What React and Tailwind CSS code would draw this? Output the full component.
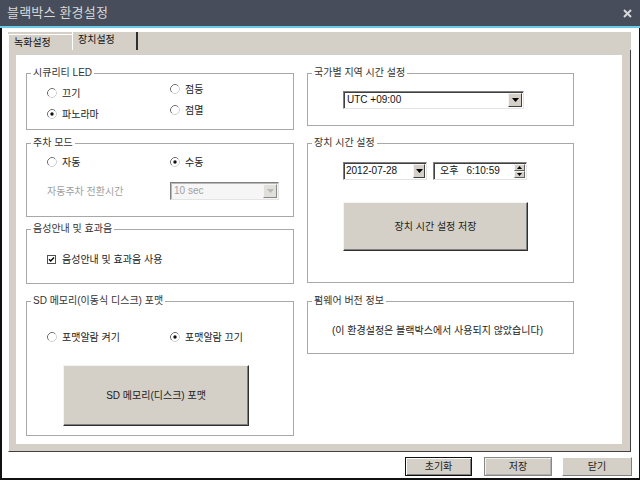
import React from 'react';

const GRAY = 'bg-[#d4d0c8]';

function Radio({ checked, label, className = '' }) {
  return (
    <div className={`flex h-[14px] items-center gap-[5px] ${className}`}>
      <svg width="10" height="10" viewBox="0 0 10 10" className="shrink-0">
        <circle cx="5" cy="5" r="4.5" fill="#fff" />
        <path d="M8.18 1.82A4.5 4.5 0 0 0 1.82 8.18" fill="none" stroke="#6e6e6e" strokeWidth="1" />
        <path d="M1.82 8.18A4.5 4.5 0 0 0 8.18 1.82" fill="none" stroke="#d0d0d0" strokeWidth="1" />
        {checked && <circle cx="5" cy="5" r="1.7" fill="#111" />}
      </svg>
      <span>{label}</span>
    </div>
  );
}

function Arrow({ color = '#000' }) {
  return (
    <svg width="7" height="4" viewBox="0 0 7 4">
      <path d="M0 0h7L3.5 4z" fill={color} />
    </svg>
  );
}

function DropButton({ disabled, w = 'w-[14px]' }) {
  return (
    <span
      className={`flex ${w} shrink-0 items-center justify-center border-t border-l border-t-[#f4f4f4] border-l-[#f4f4f4] border-b border-r border-b-[#404040] border-r-[#404040] ${GRAY} ${
        disabled ? 'opacity-60' : ''
      }`}
    >
      <Arrow color={disabled ? '#909090' : '#000'} />
    </span>
  );
}

function Field({ className = '', disabled, children }) {
  return (
    <div
      className={`flex h-[18px] border border-t-[#808080] border-l-[#808080] border-b-[#e4e4e4] border-r-[#e4e4e4] p-[1px] ${
        disabled
          ? 'bg-[#f6f6f6] text-[#a0a0a0] shadow-[inset_1px_1px_0_#b8b8b8]'
          : 'bg-white shadow-[inset_1px_1px_0_#404040]'
      } ${className}`}
    >
      {children}
    </div>
  );
}

function GroupBox({ title, className = '', children }) {
  return (
    <div className={`relative border border-[#a8a8a8] ${className}`}>
      <span className="absolute -top-[7px] left-[4px] bg-white px-[2px] leading-[12px] text-[#333]">
        {title}
      </span>
      {children}
    </div>
  );
}

function BigButton({ className = '', children }) {
  return (
    <div
      className={`flex items-center justify-center border-t border-l border-t-[#f4f4f4] border-l-[#f4f4f4] border-b border-r border-b-[#303030] border-r-[#303030] ${GRAY} text-[#222] shadow-[inset_-1px_-1px_0_#808080] ${className}`}
    >
      {children}
    </div>
  );
}

export default function App() {
  return (
    <div className="flex h-[480px] w-[640px] flex-col overflow-hidden bg-white font-['Liberation_Sans','Noto_Sans_CJK_KR',sans-serif] text-[10px] text-[#222]">
      {/* title bar */}
      <div className="flex h-[26px] shrink-0 items-center justify-between bg-[#474d5b] pl-[7px] pr-[8px]">
        <span className="text-[13px] tracking-[0.2px] text-[#d8d8d8]">블랙박스 환경설정</span>
        <svg width="9" height="9" viewBox="0 0 9 9">
          <path d="M1 1L8 8M8 1L1 8" stroke="#d8d8d8" strokeWidth="2" />
        </svg>
      </div>
      <div className="h-[2px] shrink-0 bg-[#6acbe8]" />

      <div className="flex-1 border-l-2 border-r border-b-2 border-[#111] bg-white">
        {/* tab control */}
        <div className="ml-[6px] mt-[4px] w-[623px]">
          <div className={`flex h-[18px] items-end ${GRAY}`}>
            <div className="h-[16px] w-[64px] border-t border-l border-white pl-[5px] leading-[15px] text-[#111]">
              녹화설정
            </div>
            <div className="h-[18px] w-[66px] border-l border-l-white border-r-2 border-r-[#303030] pl-[5px] leading-[16px] text-[#111]">
              장치설정
            </div>
          </div>

          <div
            className={`border-l border-l-white border-r border-r-[#404040] border-b border-b-[#404040] ${GRAY} pb-[7px] pl-[7px] pr-[8px] pt-[5px]`}
          >
            <div className="flex h-[389px] w-[606px] bg-white pl-[10px] pt-[18px]">
              {/* left column */}
              <div className="flex w-[268px] flex-col">
                <GroupBox title="시큐리티 LED" className="h-[57px]">
                  <div className="flex items-start">
                    <div className="ml-[20px] mt-[12px] flex w-[123px] flex-col gap-[7px]">
                      <Radio label="끄기" />
                      <Radio label="파노라마" checked />
                    </div>
                    <div className="mt-[8px] flex flex-col gap-[7px]">
                      <Radio label="점등" />
                      <Radio label="점멸" />
                    </div>
                  </div>
                </GroupBox>

                <GroupBox title="주차 모드" className="mt-[13px] h-[74px]">
                  <div className="ml-[20px] mt-[11px] flex">
                    <Radio label="자동" className="w-[123px]" />
                    <Radio label="수동" checked />
                  </div>
                  <div className="ml-[20px] mt-[13px] flex items-center">
                    <span className="w-[123px] text-[#a0a0a0]">자동주차 전환시간</span>
                    <Field disabled className="w-[109px]">
                      <span className="flex-1 pl-[2px] leading-[14px]">10 sec</span>
                      <DropButton disabled />
                    </Field>
                  </div>
                </GroupBox>

                <GroupBox title="음성안내 및 효과음" className="mt-[12px] h-[55px]">
                  <div className="ml-[20px] mt-[22px] flex h-[14px] items-center gap-[6px]">
                    <svg width="9" height="9" viewBox="0 0 9 9" className="shrink-0">
                      <rect x="0.5" y="0.5" width="8" height="8" fill="#fff" stroke="#505050" />
                      <path d="M2 4.3L3.7 6L7 2.6" fill="none" stroke="#000" strokeWidth="1.4" />
                    </svg>
                    <span>음성안내 및 효과음 사용</span>
                  </div>
                </GroupBox>

                <GroupBox title="SD 메모리(이동식 디스크) 포맷" className="mt-[17px] h-[135px]">
                  <div className="ml-[20px] mt-[28px] flex">
                    <Radio label="포맷알람 켜기" className="w-[123px]" />
                    <Radio label="포맷알람 끄기" checked />
                  </div>
                  <BigButton className="ml-[36px] mt-[21px] h-[61px] w-[186px]">
                    SD 메모리(디스크) 포맷
                  </BigButton>
                </GroupBox>
              </div>

              {/* right column */}
              <div className="ml-[13px] flex w-[267px] flex-col">
                <GroupBox title="국가별 지역 시간 설정" className="h-[53px]">
                  <Field className="ml-[35px] mt-[17px] w-[181px]">
                    <span className="flex-1 pl-[2px] leading-[14px] text-[#111]">UTC +09:00</span>
                    <DropButton />
                  </Field>
                </GroupBox>

                <GroupBox title="장치 시간 설정" className="mt-[17px] h-[140px]">
                  <div className="ml-[35px] mt-[18px] flex gap-[6px]">
                    <Field className="w-[84px]">
                      <span className="flex-1 pl-[1px] leading-[14px] text-[#111]">2012-07-28</span>
                      <DropButton w="w-[12px]" />
                    </Field>
                    <Field className="w-[94px]">
                      <span className="flex flex-1 pl-[5px] leading-[14px] text-[#111]">
                        <span>오후</span>
                        <span className="ml-[8px]">6:10:59</span>
                      </span>
                      <span className="flex w-[11px] shrink-0 flex-col">
                        <span className={`flex flex-1 items-center justify-center border-t border-l border-t-[#f4f4f4] border-l-[#f4f4f4] border-b border-r border-b-[#606060] border-r-[#606060] ${GRAY}`}>
                          <svg width="5" height="3" viewBox="0 0 5 3">
                            <path d="M0 3h5L2.5 0z" fill="#000" />
                          </svg>
                        </span>
                        <span className={`flex flex-1 items-center justify-center border-t border-l border-t-[#f4f4f4] border-l-[#f4f4f4] border-b border-r border-b-[#606060] border-r-[#606060] ${GRAY}`}>
                          <svg width="5" height="3" viewBox="0 0 5 3">
                            <path d="M0 0h5L2.5 3z" fill="#000" />
                          </svg>
                        </span>
                      </span>
                    </Field>
                  </div>
                  <BigButton className="ml-[35px] mt-[22px] h-[49px] w-[185px]">
                    장치 시간 설정 저장
                  </BigButton>
                </GroupBox>

                <GroupBox title="펌웨어 버전 정보" className="mt-[18px] h-[53px]">
                  <div className="flex justify-center pr-[6px] pt-[22px] leading-[14px] text-[#222]">
                    (이 환경설정은 블랙박스에서 사용되지 않았습니다)
                  </div>
                </GroupBox>
              </div>
            </div>
          </div>
        </div>

        {/* bottom buttons */}
        <div className="mt-[5px] flex justify-end pr-[7px]">
          <div
            className={`flex h-[19px] w-[67px] items-center justify-center border border-[#111] ${GRAY} shadow-[inset_1px_1px_0_#fff,inset_-1px_-1px_0_#808080]`}
          >
            초기화
          </div>
          <div
            className={`ml-[12px] flex h-[19px] w-[68px] items-center justify-center border border-[#888] ${GRAY} shadow-[inset_1px_1px_0_#f0f0f0,inset_-1px_-1px_0_#b0b0b0]`}
          >
            저장
          </div>
          <div
            className={`ml-[10px] flex h-[19px] w-[70px] items-center justify-center border-t border-l border-t-white border-l-white border-b border-r border-b-[#808080] border-r-[#808080] ${GRAY}`}
          >
            닫기
          </div>
        </div>
      </div>
    </div>
  );
}
